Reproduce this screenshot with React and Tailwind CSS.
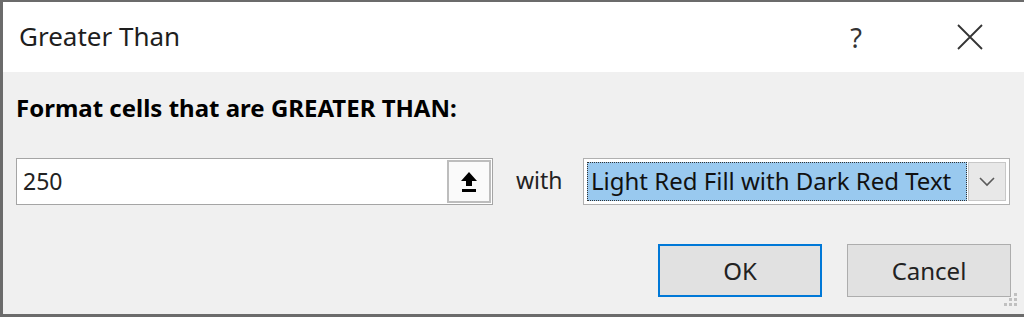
import React from "react";

const font = { fontFamily: '"Noto Sans", "Open Sans", sans-serif' };

function UploadIcon() {
  return (
    <svg width="18" height="22" viewBox="0 0 18 22">
      <path d="M9 1 L17 10 L12 10 L12 15 L6 15 L6 10 L1 10 Z" fill="#000" />
      <rect x="2" y="18" width="14" height="3" fill="#000" />
    </svg>
  );
}

function Chevron() {
  return (
    <svg width="18" height="12" viewBox="0 0 18 12">
      <path d="M2 2 L9 9 L16 2" fill="none" stroke="#5a5a5a" strokeWidth="1.6" />
    </svg>
  );
}

export default function App() {
  return (
    <div
      className="w-[1024px] h-[317px] overflow-hidden border-t-2 border-l-[3px] border-b-[3px] border-[#6b6b6b] bg-[#f0f0f0] flex flex-col relative"
      style={font}
    >
      <div className="h-[70px] bg-white flex items-center pl-[16px] shrink-0">
        <span className="text-[26px] text-[#1e1e1e] leading-none flex-1 pb-[2px]">Greater Than</span>
        <span className="text-[27px] text-[#333] leading-none w-[30px] text-center mr-[86px]">?</span>
        <svg width="26" height="26" viewBox="0 0 26 26" className="mr-[41px]">
          <path d="M1 1 L25 25 M25 1 L1 25" stroke="#333" strokeWidth="1.8" fill="none" />
        </svg>
      </div>
      <div className="flex-1 flex flex-col pl-[13px] pr-[11px]">
        <div className="mt-[20px] text-[24px] font-bold text-black leading-[32px]">
          Format cells that are GREATER THAN:
        </div>
        <div className="mt-[34px] flex items-center">
          <div className="w-[477px] h-[47px] shrink-0 border border-[#a5a5a5] bg-white flex items-center">
            <span className="flex-1 pl-[6px] text-[23px] text-[#222] leading-none">250</span>
            <div className="w-[44px] h-[43px] mr-px border-2 border-[#bdbdbd] bg-[#fafafa] flex items-center justify-center">
              <UploadIcon />
            </div>
          </div>
          <span className="ml-[23px] w-[67px] shrink-0 text-[23px] text-[#222] leading-none pb-[3px]">with</span>
          <div className="w-[427px] h-[47px] shrink-0 border border-[#b0b0b0] bg-white flex items-center p-[3px]">
            <div className="flex-1 h-full bg-[#99c9ef] border border-dotted border-[#333] flex items-center pl-[3px] text-[24px] text-[#111] leading-none pb-[2px]">
              Light Red Fill with Dark Red Text
            </div>
            <div className="w-[38px] h-full ml-[1px] border border-[#c8c8c8] bg-[#e8e8e8] flex items-center justify-center">
              <Chevron />
            </div>
          </div>
        </div>
        <div className="mt-[39px] flex justify-end gap-[25px] pr-[2px]">
          <button className="w-[164px] h-[53px] border-2 border-[#0078d7] bg-[#e1e1e1] text-[24px] text-[#222] leading-none" style={font}>
            OK
          </button>
          <button className="w-[164px] h-[53px] border border-[#adadad] bg-[#e1e1e1] text-[24px] text-[#222] leading-none" style={font}>
            Cancel
          </button>
        </div>
      </div>
      <div className="absolute right-[6px] bottom-[5px] w-[16px] h-[16px]">
        <svg width="16" height="16" viewBox="0 0 16 16">
          <rect x="12" y="0" width="3" height="3" fill="#c0c0c0" />
          <rect x="7" y="5" width="3" height="3" fill="#c0c0c0" />
          <rect x="12" y="5" width="3" height="3" fill="#c0c0c0" />
          <rect x="2" y="10" width="3" height="3" fill="#c0c0c0" />
          <rect x="7" y="10" width="3" height="3" fill="#c0c0c0" />
          <rect x="12" y="10" width="3" height="3" fill="#c0c0c0" />
        </svg>
      </div>
    </div>
  );
}
